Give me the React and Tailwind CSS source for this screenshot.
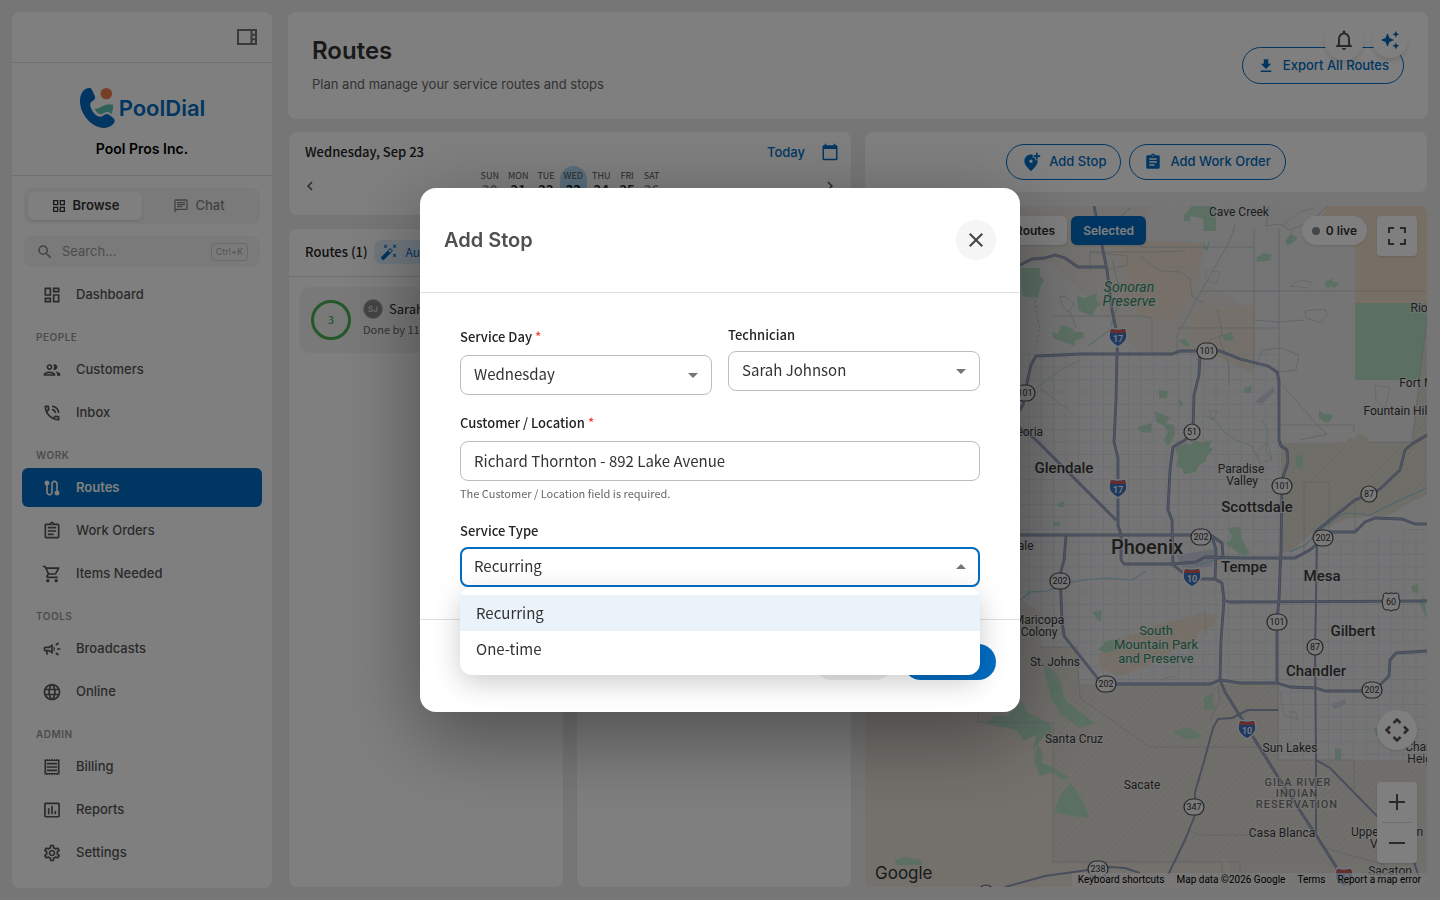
import { useState } from "react";
import {
  MdAddLocationAlt,
  MdArrowDropDown,
  MdArrowDropUp,
  MdAssignment,
  MdAutoAwesome,
  MdAutoFixHigh,
  MdCalendarToday,
  MdChevronLeft,
  MdChevronRight,
  MdClose,
  MdDownload,
  MdInsertChartOutlined,
  MdLanguage,
  MdOutlineAssignment,
  MdOutlineCampaign,
  MdOutlineChat,
  MdOutlineDashboard,
  MdOutlineGridView,
  MdOutlineNotifications,
  MdOutlinePhoneInTalk,
  MdOutlineReceipt,
  MdOutlineSettings,
  MdOutlineShoppingCart,
  MdOutlineViewSidebar,
  MdRoute,
  MdSearch,
} from "react-icons/md";

function GroupIcon({ size }) {
  return (
    <svg width={size} height={size} viewBox="0 0 24 24" fill="currentColor" aria-hidden="true">
      <path d="M9 13.750c-2.340 0-7 1.170-7 3.500V19h14v-1.750c0-2.330-4.660-3.500-7-3.500zM4.340 17c.840-.580 2.870-1.250 4.660-1.250s3.820.670 4.660 1.250H4.340zM9 12c1.930 0 3.500-1.570 3.500-3.500S10.930 5 9 5 5.500 6.570 5.500 8.500 7.070 12 9 12zm0-5c.830 0 1.500.670 1.500 1.500S9.830 10 9 10s-1.500-.670-1.500-1.500S8.170 7 9 7zm7.040 6.810c1.160.840 1.960 1.960 1.960 3.440V19h4v-1.750c0-2.020-3.500-3.170-5.960-3.440zM15 12c1.930 0 3.500-1.570 3.500-3.500S16.930 5 15 5c-.540 0-1.040.130-1.500.350.630.890 1 1.980 1 3.150s-.370 2.260-1 3.150c.460.220.960.350 1.500.350z" />
    </svg>
  );
}

const NAV = [
  { title: null, items: [["Dashboard", MdOutlineDashboard]] },
  {
    title: "PEOPLE",
    items: [
      ["Customers", GroupIcon],
      ["Inbox", MdOutlinePhoneInTalk],
    ],
  },
  {
    title: "WORK",
    items: [
      ["Routes", MdRoute],
      ["Work Orders", MdOutlineAssignment],
      ["Items Needed", MdOutlineShoppingCart],
    ],
  },
  {
    title: "TOOLS",
    items: [
      ["Broadcasts", MdOutlineCampaign],
      ["Online", MdLanguage],
    ],
  },
  {
    title: "ADMIN",
    items: [
      ["Billing", MdOutlineReceipt],
      ["Reports", MdInsertChartOutlined],
      ["Settings", MdOutlineSettings],
    ],
  },
];

const WEEK = [
  ["SUN", 20],
  ["MON", 21],
  ["TUE", 22],
  ["WED", 23],
  ["THU", 24],
  ["FRI", 25],
  ["SAT", 26],
];

function Logo() {
  return (
    <div className="flex items-center justify-center">
      <svg width="36" height="42" viewBox="0 0 36 42" aria-hidden="true">
        <path
          d="M7.500 1.600C10 .7 12 1 12.800 2.600L16 9.500C16.700 11.500 15 13 12.800 14.600 11 16 11 18 11.600 20 13.300 24.800 16.500 28.600 20.500 29.800 23.300 30.200 25 27.400 28 27 30 27 33 29.800 35 31.800 36.300 33.600 35.600 35.700 34 37.300 31.200 39.900 28 41 25 41 12.500 40.400 1 27.500 1 14 1 8 3.600 3.100 7.500 1.600z"
          fill="#006dc3"
        />
        <circle cx="27.300" cy="6.700" r="5.800" fill="#f07c4c" />
        <path
          d="M15.300 21.600C18.500 22.600 21.500 20 24 18.900 27 17.700 30.500 17.200 34 17.800 34.200 21.500 33.600 24.500 32.500 27.200 31 25.400 29.500 24.800 27.500 25 25.300 25.300 24 27.400 21.700 27.500 19.200 27.200 17 24.900 15.300 21.600z"
          fill="#5ec4b4"
        />
      </svg>
      <span className="ml-1 font-['Inter'] text-[22px] leading-8 font-semibold text-[#006dc3]">PoolDial</span>
    </div>
  );
}

function Sidebar() {
  const [query, setQuery] = useState("");

  return (
    <aside className="flex w-65 shrink-0 flex-col rounded-lg bg-white">
      <div className="flex h-[51px] items-center justify-end border-b border-[#e0e0e0] px-[13px]">
        <button aria-label="Toggle sidebar" className="text-[#757575]">
          <MdOutlineViewSidebar size={24} />
        </button>
      </div>

      <div className="border-b border-[#e0e0e0] pt-6 pb-3.5">
        <Logo />
        <p className="mt-2 text-center text-sm leading-6 font-semibold text-black">Pool Pros Inc.</p>
      </div>

      <div className="px-3 pt-3">
        <div className="flex rounded-lg bg-[#f5f5f5] p-1">
          <button className="flex h-7 flex-1 items-center justify-center gap-1.5 rounded-md bg-white text-[13px] font-semibold text-[#333] shadow-sm">
            <MdOutlineGridView size={16} /> Browse
          </button>
          <button className="flex h-7 flex-1 items-center justify-center gap-1.5 rounded-md text-[13px] font-medium text-[#858585]">
            <MdOutlineChat size={16} /> Chat
          </button>
        </div>
        <label className="mt-3 flex h-[31px] items-center rounded-lg bg-[#f5f5f5] px-3 text-[#858585]">
          <MdSearch size={18} />
          <input
            aria-label="Search"
            placeholder="Search..."
            value={query}
            onChange={(e) => setQuery(e.target.value)}
            className="ml-2 min-w-0 flex-1 bg-transparent text-[13px] outline-none placeholder:text-[#999]"
          />
          <kbd className="rounded border border-[#d5d5d5] px-1 font-['Inter'] text-[9px] leading-4 text-[#aaa]">
            Ctrl+K
          </kbd>
        </label>
      </div>

      <nav className="px-2.5 pt-2">
        {NAV.map((group) => (
          <div key={group.title || "main"}>
            {group.title && (
              <h2 className="h-9 px-3.5 pt-[15px] text-[10px] leading-4 font-semibold tracking-wider text-[#999]">
                {group.title}
              </h2>
            )}
            <ul className="space-y-1">
              {group.items.map(([label, Icon]) => (
                <li key={label}>
                  <a
                    href="#"
                    className={
                      label === "Routes"
                        ? "flex h-[39px] items-center gap-3.5 rounded-md bg-[#006dc3] px-5 text-[13px] font-semibold text-white"
                        : "flex h-[39px] items-center gap-3.5 rounded-md px-5 text-[13px] font-medium text-[#555]"
                    }
                  >
                    <Icon size={20} />
                    {label}
                  </a>
                </li>
              ))}
            </ul>
          </div>
        ))}
      </nav>
    </aside>
  );
}

function Header() {
  return (
    <header className="flex items-center justify-between rounded-lg bg-white p-6">
      <div>
        <h1 className="text-2xl leading-[30px] font-semibold text-[#333]">Routes</h1>
        <p className="mt-2 text-[13px] leading-[21px] text-[#666]">Plan and manage your service routes and stops</p>
      </div>
      <button className="flex h-[37px] items-center gap-2 rounded-full border border-[#006dc3] px-3.5 text-[13px] font-medium text-[#006dc3]">
        <MdDownload size={18} /> Export All Routes
      </button>
    </header>
  );
}

function WeekStrip() {
  return (
    <section className="h-[83px] overflow-hidden rounded-lg bg-white font-['Noto_Sans_CJK_JP',sans-serif]">
      <div className="flex items-center justify-between pt-2.5 pr-3 pl-4">
        <h2 className="text-[13px] leading-5 font-medium text-[#222]">Wednesday, Sep 23</h2>
        <div className="flex items-center gap-4">
          <button className="font-['Inter'] text-[13px] leading-5 font-medium text-[#006dc3]">Today</button>
          <button aria-label="Pick a date" className="text-[#006dc3]">
            <MdCalendarToday size={18} />
          </button>
        </div>
      </div>
      <div className="flex items-start justify-between px-3 pt-1">
        <button aria-label="Previous week" className="pt-[11px] text-[#555]">
          <MdChevronLeft size={18} />
        </button>
        <div className="flex gap-px">
          {WEEK.map(([day, date]) => (
            <button
              key={day}
              className={
                day === "WED"
                  ? "flex h-11 flex-col items-center rounded-full bg-[#b3dcf8] px-1 text-[#111]"
                  : day === "SUN" || day === "SAT"
                    ? "flex h-11 flex-col items-center rounded-full px-1 text-[#999]"
                    : "flex h-11 flex-col items-center rounded-full px-1 text-[#333]"
              }
            >
              <span className="pt-1 text-[9px] leading-3 text-[#555]">{day}</span>
              <span className="text-[13px] leading-4 font-bold">{date}</span>
            </button>
          ))}
        </div>
        <button aria-label="Next week" className="pt-[11px] text-[#555]">
          <MdChevronRight size={18} />
        </button>
      </div>
    </section>
  );
}

function RouteList() {
  return (
    <section className="min-w-0 flex-1 overflow-hidden rounded-lg bg-white font-['Noto_Sans_CJK_JP',sans-serif]">
      <div className="flex h-12 items-center gap-1.5 border-b border-[#ddd] pb-0.5 pl-4">
        <h2 className="text-[13px] font-medium whitespace-nowrap text-[#222]">Routes (1)</h2>
        <button className="flex h-6 items-center gap-2 rounded-lg bg-[#e0f0fc] px-1.5 text-xs whitespace-nowrap text-[#006dc3]">
          <MdAutoFixHigh size={18} /> Auto Assign
        </button>
      </div>
      <div className="p-2.5">
        <article className="flex h-[66px] items-center gap-3 rounded-xl bg-[#f2f2f2] px-3">
          <span className="flex size-10 shrink-0 items-center justify-center rounded-full border-3 border-[#4caf50] text-[10px] leading-4 font-medium text-[#4caf50]">
            3
          </span>
          <div className="min-w-0 pb-1">
            <div className="flex items-center gap-1.5">
              <span className="flex size-5 items-center justify-center rounded-full border border-[#bbb] bg-[#8a8a8a] font-['Inter'] text-[8px] font-semibold text-[#ddd]">
                SJ
              </span>
              <h3 className="text-[13px] leading-5 whitespace-nowrap text-[#222]">Sarah Johnson</h3>
            </div>
            <p className="mt-0.5 text-[11px] leading-4 whitespace-nowrap text-[#666]">Done by 11:30 AM</p>
          </div>
        </article>
      </div>
    </section>
  );
}

/* ---------- map ---------- */

const HIGHWAYS = [
  "M1094 206L1107 270 1112 310 1118 338 1117 354 1116 400 1114 442 1118 458 1118 525 1121 535 1121 560 1124 564 1172 564 1182 572 1192 578",
  "M1005 273L1020 265 1032 259 1045 258 1055 255 1065 258 1078 267 1106 267",
  "M1010 425L1023 405 1028 378 1031 365 1036 356 1060 355 1080 354 1172 354 1180 351 1220 351 1240 359 1268 366 1277 372 1279 381 1279 440 1281 446 1287 450 1288 462 1282 480 1281 550 1279 600 1277 620 1277 683",
  "M1200 355L1199 375 1194 395 1193 430 1185 440 1173 447 1170 470 1168 510 1172 520 1173 566",
  "M1010 535L1200 535 1212 536 1222 543 1223 556",
  "M1018 426L1036 440 1042 446 1116 520",
  "M1066 536L1064 560 1060 575 1062 620 1064 636 1099 680 1110 684 1210 684 1220 680 1240 683 1277 683 1290 687 1316 688 1325 691 1365 691 1380 685 1389 676 1390 660 1396 653 1427 651",
  "M1192 579L1215 579 1222 583 1224 600 1221 640 1220 680 1225 692 1250 732 1278 777 1316 835 1340 873 1350 887",
  "M1212 536L1216 550 1215 579M1172 564L1196 562 1205 557 1240 558 1295 558 1310 550 1323 539",
  "M1315 532L1355 500 1370 494 1380 489 1400 470 1405 450 1412 444 1427 435",
  "M1320 532L1355 532 1365 522 1375 518 1402 519 1415 524 1427 524",
  "M1222 600L1230 602 1427 601",
];

const SECONDARY = [
  "M1317 540L1316 600 1315 650 1316 760 1316 835M1316 760L1330 768 1378 817 1410 850 1420 880",
  "M1278 710L1248 710 1240 714 1232 718 1218 719 1213 728 1203 765 1195 792 1195 815 1185 840 1168 875",
  "M1005 887L1045 876 1088 870 1110 867 1125 868 1140 873",
];

const GREENS = [
  "M1020 268L1040 268 1040 276 1044 280 1040 288 1038 298 1022 296z",
  "M1077 296L1084 298 1097 293 1096 300 1101 304 1096 308 1092 316 1078 310z",
  "M1052 332L1058 334 1061 325 1072 328 1074 332 1083 332 1084 338 1076 340 1074 346 1064 342 1053 338z",
  "M1184 215L1192 206 1216 206 1216 231 1204 231 1203 218 1190 216 1190 221 1184 221z",
  "M1258 257L1263 253 1273 255 1265 261 1256 262z",
  "M1355 303L1427 303 1427 322 1420 380 1355 380z",
  "M1324 283L1332 278 1332 281 1339 283 1335 288 1330 286 1328 289z",
  "M1175 448L1186 443 1190 445 1196 440 1200 443 1212 440 1209 447 1213 449 1206 458 1206 461 1198 466 1196 472 1184 474 1182 468 1176 466 1178 458z",
  "M1155 411L1162 414 1171 418 1165 423 1174 425 1175 435 1168 446 1164 440 1168 432 1164 426 1156 422z",
  "M1159 390L1168 391 1167 398 1159 398z",
  "M1228 528L1240 527 1242 545 1236 541 1228 548 1232 536z",
  "M1319 410L1324 414 1333 414 1331 420 1326 423 1319 418z",
  "M1225 543L1240 537 1250 553 1243 556z",
  "M1043 665L1053 670 1061 683 1065 700 1080 712 1095 723 1080 728 1062 716 1052 700z",
  "M1022 700L1027 712 1050 724 1052 732 1044 736 1033 751 1036 735 1024 741 1016 730 985 724 994 716 1008 716z",
  "M1038 745L1043 753 1042 763 1050 766 1062 773 1069 777 1063 780 1055 774 1048 773 1040 776 1034 760z",
  "M1071 783L1079 794 1090 818 1072 816 1054 812 1060 796z",
  "M1098 650L1106 641 1120 638 1118 650 1105 653z",
  "M1173 733L1180 729 1190 728 1202 735 1196 739 1186 739z",
  "M1204 698L1214 693 1212 700 1216 709 1204 710z",
  "M1335 748L1341 749 1341 760 1335 759z",
  "M1203 241L1206 247 1210 240 1208 251 1203 249z",
  "M1285 242L1290 234 1298 237 1293 243 1288 245z",
  "M1255 258L1262 256 1273 259 1264 262zM1178 399L1183 403 1180 408z",
  "M1138 427L1152 423 1151 433 1140 432z",
  "M1057 504L1064 501 1064 507 1059 507zM1053 522L1060 522 1060 526 1053 526z",
  "M1178 340L1186 339 1190 345 1187 347zM1222 335L1232 332 1234 340 1224 341z",
  "M1296 456L1303 455 1303 469 1296 468zM1374 728L1388 724 1389 735 1384 730 1376 736z",
  "M1093 612L1102 610 1101 622 1096 618zM1244 388L1252 386 1251 393 1245 393z",
  "M895 860L905 857 922 860 922 865 896 865z",
  "M1424 594L1427 620 1420 604zM1411 586L1418 584 1418 594 1413 592z",
];

// [text, x, y, size, weight]
const CITIES = [
  ["Cave Creek", 1239, 216, 12, 400],
  ["Glendale", 1064, 473, 15, 500],
  ["Scottsdale", 1257, 512, 15, 500],
  ["Paradise", 1241, 473, 12, 400],
  ["Valley", 1242, 485, 12, 400],
  ["Phoenix", 1147, 554, 20, 500],
  ["Tempe", 1244, 572, 15, 500],
  ["Mesa", 1322, 581, 15, 500],
  ["Gilbert", 1353, 636, 15, 500],
  ["Chandler", 1316, 676, 15, 500],
  ["Maricopa", 1039, 624, 12, 400],
  ["Colony", 1039, 636, 12, 400],
  ["St. Johns", 1055, 666, 12, 400],
  ["Santa Cruz", 1074, 743, 12, 400],
  ["Sacate", 1142, 789, 12, 400],
  ["Sun Lakes", 1290, 752, 12, 400],
  ["Casa Blanca", 1282, 837, 12, 400],
  ["Peoria", 1026, 436, 12, 400],
  ["Avondale", 1009, 550, 12, 400],
  ["Sacaton", 1390, 875, 12, 400],
  ["Upper Santan", 1387, 836, 12, 400],
  ["Village", 1388, 848, 12, 400],
  ["Chandler", 1429, 751, 12, 400],
  ["Heights", 1428, 763, 12, 400],
  ["Rio Verde", 1436, 312, 12, 400],
  ["Fort McDowell", 1438, 387, 12, 400],
  ["Fountain Hills", 1400, 415, 12, 400],
];

// [number, x, y]
const ROUTE_BADGES = [
  [101, 1207, 351],
  [101, 1282, 486],
  [101, 1277, 622],
  [101, 1025, 393],
  [51, 1192, 432],
  [202, 1201, 537],
  [202, 1323, 538],
  [202, 1060, 581],
  [202, 1106, 684],
  [202, 1372, 690],
  [87, 1369, 494],
  [87, 1315, 647],
  [347, 1194, 807],
  [238, 1098, 869],
  [84, 986, 893],
];

const SHIELDS = [
  [17, 1118, 337],
  [17, 1118, 488],
  [10, 1192, 577],
  [10, 1247, 729],
  [10, 1344, 877],
];

function MapCanvas() {
  return (
    <svg
      className="absolute inset-0 size-full font-['Roboto']"
      viewBox="865 206 562 681"
      preserveAspectRatio="xMidYMid slice"
      role="img"
      aria-label="Map of Phoenix"
    >
      <defs>
        <pattern id="blocks" width="12.500" height="12.500" patternUnits="userSpaceOnUse" x="3" y="4">
          <path d="M0 .5H12.500M.5 0V12.500" stroke="#d6dae4" strokeWidth=".8" fill="none" />
        </pattern>
        <pattern id="hatch" width="7" height="7" patternUnits="userSpaceOnUse">
          <path d="M0 7L7 0" stroke="#d3cfc5" strokeWidth=".6" />
        </pattern>
      </defs>

      <rect x="865" y="206" width="562" height="681" fill="#ebebed" />

      {/* desert and parks */}
      <path d="M1020 206L1150 206 1140 240 1203 243 1200 280 1254 310 1254 368 1215 352 1140 355 1090 300 1050 262 1020 260z" fill="#e9e5de" />
      <path d="M1115 252L1140 241 1203 243 1200 262 1192 291 1177 318 1150 320 1118 300 1128 275z" fill="#efe0d0" />
      <path d="M1195 311L1254 305 1254 375 1228 362 1190 340z" fill="#ebe0d5" />
      <path d="M1328 206L1427 206 1427 303 1355 303 1355 230 1320 222z" fill="#efdfca" />
      <path d="M865 600L1020 600 1040 612 1040 647 1078 647 1078 684 1278 684 1278 760 1427 760 1427 887 865 887z" fill="#e2dfd6" />
      <path d="M865 712L978 712 978 722 1053 723 1053 862 1230 862 1230 887 865 887z" fill="#e9e3da" />
      <path d="M1281 443L1346 442 1348 438 1355 438 1359 433 1367 437 1368 442 1412 442 1427 318 1427 495 1410 503 1390 515 1345 519 1310 535 1290 552 1281 553z" fill="#dfdcd2" />

      {/* city blocks */}
      <path d="M1020 350L1277 350 1282 445 1281 550 1427 526 1427 760 1278 760 1278 684 1078 684 1078 648 1040 648 1040 600 1020 600z" fill="url(#blocks)" />
      <path d="M1140 206L1279 206 1279 350 1140 350z" fill="url(#blocks)" opacity=".3" />
      <path d="M1098 655L1110 642 1140 632 1160 624 1180 620 1200 613 1218 616 1214 626 1200 632 1195 642 1170 652 1150 665 1120 676 1100 668z" fill="#ecdecf" />
      <path d="M1053 723L1053 600 1078 684 1278 684 1278 760 1427 760 1427 862 1053 862z" fill="url(#hatch)" />
      <path d="M1281 443L1412 442 1427 318 1427 495 1345 519 1281 553z" fill="url(#hatch)" />

      {GREENS.map((d) => (
        <path key={d} d={d} fill="#b6dfc6" />
      ))}
      <path d="M1255 402L1273 387 1275 391 1262 404zM1176 555L1216 549 1212 566 1184 570zM1332 704L1346 699 1345 705 1334 709z" fill="#cdd2e0" />

      {/* rivers and canals */}
      <g fill="none" stroke="#9ad0dd" strokeWidth="1.200">
        <path d="M1018 602L1030 592 1047 591 1068 583 1085 580 1105 578 1132 580 1146 571" />
        <path d="M1196 566L1215 560 1240 556M1290 552L1305 545 1330 522 1345 513 1370 515 1400 500 1427 488" />
        <path d="M1117 306L1110 330 1088 346M1118 228L1122 215 1130 208" strokeWidth="1" />
        <path d="M1035 300L1040 330 1036 345" strokeWidth="1" strokeDasharray="3 2" />
      </g>
      <path
        d="M1206 416L1215 420 1225 433 1236 440 1252 446 1258 460M1040 388L1055 400 1066 408 1073 415M1036 388L1060 370 1080 360M1262 420L1268 430 1266 452 1272 460"
        fill="none"
        stroke="#bcdcc9"
        strokeWidth="1"
      />

      {/* streets and boundaries */}
      <g fill="none" stroke="#bdc1ca" strokeWidth=".8">
        <path d="M1235 225L1230 240 1206 283 1177 335 1177 355" />
        <path d="M1053 316L1140 316 1152 318 1152 354M1177 328L1279 328M1140 247L1254 247M1254 230L1254 368" />
        <path d="M1140 256L1160 271 1180 272 1190 279 1192 296 1204 303M1200 291L1427 291M1279 228L1279 380" />
        <path d="M1089 252L1152 252 1185 251M1090 271L1090 252 1127 256 1127 265 1105 270M1112 260L1120 290" />
        <path d="M1269 206L1266 226 1280 224 1290 230 1310 222 1328 206M1254 320L1279 322 1304 320" />
        <path d="M1305 311L1325 309 1327 315 1320 323 1306 318zM1256 366L1262 350 1280 348 1299 355 1296 370 1278 372" />
        <path d="M1282 385L1300 405 1320 428 1327 434 1300 440M1279 425L1354 425 1354 432" />
        <path d="M1304 482L1329 482 1329 531M1304 482L1304 553M1355 498L1355 532" />
        <path d="M1040 647L1078 647M1078 665L1080 698 1150 747 1262 747M1218 684L1220 700 1210 720" />
        <path d="M978 712L978 722 1053 723 1053 862 1222 862 1222 887M1278 684L1278 760 1354 760 1354 790M1188 830L1200 835 1250 835" />
        <path d="M1325 848L1385 865M1228 862L1240 862 1240 887M1427 318L1412 442 1368 442" />
        <path d="M1196 360L1210 340 1223 335M1217 310L1222 330 1220 340 1229 366 1229 385M1060 296L1066 297 1074 304 1068 312 1062 306zM1070 312L1076 328" />
      </g>
      <g fill="none" stroke="#b9c6c0" strokeWidth=".7" opacity=".8">
        <path d="M1283 225L1300 212 1314 208M1287 245L1293 230M1206 270L1220 272 1216 284 1206 280zM1290 286L1300 280 1312 282 1308 288zM1375 385L1390 388 1385 408 1376 400zM1209 410L1218 412 1212 420z" />
        <path d="M1160 680L1175 676M1280 692L1284 715 1298 720 1296 712 1288 712M1205 610L1206 636M1257 452L1268 442 1272 460 1260 463z" />
      </g>

      <g fill="none" strokeLinejoin="round">
        {HIGHWAYS.map((d) => (
          <path key={d} d={d} stroke="#8590ae" strokeWidth="2.800" />
        ))}
        {HIGHWAYS.map((d) => (
          <path key={d} d={d} stroke="#a2adc9" strokeWidth="1.300" />
        ))}
        {SECONDARY.map((d) => (
          <path key={d} d={d} stroke="#929cb8" strokeWidth="2" />
        ))}
      </g>

      {ROUTE_BADGES.map(([num, x, y]) => (
        <g key={`${num}-${x}`}>
          <rect
            x={num > 99 ? x - 10 : x - 8}
            y={y - 8}
            width={num > 99 ? 20 : 16}
            height="16"
            rx="8"
            fill="#f2f2f2"
            stroke="#4a4a4a"
            strokeWidth="1.200"
          />
          <text x={x} y={y + 3} fontSize="9" textAnchor="middle" fill="#333">
            {num}
          </text>
        </g>
      ))}
      <g>
        <path
          d="M1383 595q1-2 3-2 2 1 5 0 3 1 5 0 2 0 3 2-1 3 1 6-1 4-1 6-1 3-3 3-2-1-5 1-3-2-5-1-2 0-3-3 0-2-1-6 2-3 1-6z"
          fill="#f2f2f2"
          stroke="#444"
        />
        <text x="1391" y="605" fontSize="9" textAnchor="middle" fill="#333">60</text>
      </g>
      {SHIELDS.map(([num, x, y]) => (
        <g key={`${num}-${y}`}>
          <path
            d={`M${x - 7} ${y - 9}q7 2 14 0q2 4 2 8q0 6-9 11q-9-5-9-11q0-4 2-8z`}
            fill="#3d74c4"
            stroke="#eee"
            strokeWidth="1.500"
          />
          <path d={`M${x - 7} ${y - 8}q7 2 14 0l1 4h-16z`} fill="#cf5a57" />
          <text x={x} y={y + 5} fontSize="9" fontWeight="500" textAnchor="middle" fill="#fff">
            {num}
          </text>
        </g>
      ))}

      <g textAnchor="middle" stroke="#efefef" strokeWidth="2" strokeOpacity=".7" paintOrder="stroke">
        {CITIES.map(([name, x, y, size, weight]) => (
          <text key={`${name}-${y}`} x={x} y={y} fontSize={size} fontWeight={weight} fill="#3a3a3a">
            {name}
          </text>
        ))}
        <g fill="#2c8a63" fontSize="13">
          <text x="1129" y="292" fontSize="14" fontStyle="italic">Sonoran</text>
          <text x="1129" y="306" fontSize="14" fontStyle="italic">Preserve</text>
          <text x="1156" y="635">South</text>
          <text x="1156" y="649">Mountain Park</text>
          <text x="1156" y="663">and Preserve</text>
        </g>
        <g fill="#777" fontSize="11" fontWeight="500" letterSpacing="1">
          <text x="1298" y="786">GILA RIVER</text>
          <text x="1297" y="797">INDIAN</text>
          <text x="1297" y="808">RESERVATION</text>
        </g>
      </g>
    </svg>
  );
}

function MapPanel() {
  return (
    <section className="relative min-h-0 flex-1 overflow-hidden rounded-lg">
      <MapCanvas />

      <div className="absolute top-2.5 left-30 flex gap-1 font-['Inter'] text-xs font-semibold">
        <button className="h-[29px] rounded-md bg-white px-3 text-[#333] shadow">All Routes</button>
        <button className="h-[29px] rounded-md bg-[#006dc3] px-3 text-white shadow">Selected</button>
      </div>

      <div className="absolute top-2.5 right-2.5 flex items-start gap-2.5">
        <div className="flex h-[29px] items-center gap-1.5 rounded-full bg-white px-2.5 text-xs font-semibold text-[#333] shadow">
          <span className="size-2 rounded-full bg-[#8a8a8a]" /> 0 live
        </div>
        <button aria-label="Toggle fullscreen" className="flex size-10 items-center justify-center rounded-sm bg-white shadow">
          <svg width="18" height="18" viewBox="0 0 18 18" fill="none" stroke="#555" strokeWidth="2">
            <path d="M6 1H1V6M12 1H17V6M6 17H1V12M12 17H17V12" />
          </svg>
        </button>
      </div>

      <div className="absolute right-2.5 bottom-6 flex flex-col gap-8">
        <button aria-label="Map camera controls" className="flex size-10 items-center justify-center rounded-full bg-white shadow">
          <svg width="24" height="24" viewBox="0 0 24 24" fill="none" stroke="#555" strokeWidth="2.500">
            <path d="M8.500 5L12 1.500 15.500 5M8.500 19L12 22.500 15.500 19M5 8.500L1.500 12 5 15.500M19 8.500L22.500 12 19 15.500" />
          </svg>
        </button>
        <div className="flex flex-col items-center rounded-sm bg-white shadow">
          <button aria-label="Zoom in" className="flex size-10 items-center justify-center">
            <svg width="16" height="16" stroke="#555" strokeWidth="2">
              <path d="M8 0V16M0 8H16" />
            </svg>
          </button>
          <span className="h-px w-7.5 bg-[#ddd]" />
          <button aria-label="Zoom out" className="flex size-10 items-center justify-center">
            <svg width="16" height="16" stroke="#555" strokeWidth="2">
              <path d="M0 8H16" />
            </svg>
          </button>
        </div>
      </div>

      <span className="absolute bottom-0.5 left-2.5 font-['Inter'] text-[17px] leading-6 text-[#333]">Google</span>
      <div className="absolute right-0 bottom-0 flex gap-3 bg-[#f5f5f5]/70 px-1.5 font-['Roboto'] text-[10px] leading-[14px] text-black">
        <button>Keyboard shortcuts</button>
        <span>Map data ©2026 Google</span>
        <a href="#">Terms</a>
        <a href="#">Report a map error</a>
      </div>
    </section>
  );
}

/* ---------- dialog ---------- */

const FIELD =
  "h-10 w-full appearance-none rounded-lg border border-[#bdbdbd] bg-white px-[13px] pb-0.5 text-[15px] text-[#333] outline-none";

function AddStopDialog() {
  const [day, setDay] = useState("Wednesday");
  const [tech, setTech] = useState("Sarah Johnson");
  const [customer, setCustomer] = useState("Richard Thornton - 892 Lake Avenue");
  const [type, setType] = useState("Recurring");

  return (
    <div className="fixed inset-0 z-20 flex items-center justify-center bg-black/50">
      <div
        role="dialog"
        aria-labelledby="dialog-title"
        className="w-150 max-w-full rounded-2xl bg-white font-['Noto_Sans_CJK_JP',sans-serif] shadow-[0_24px_80px_rgba(0,0,0,0.4)]"
      >
        <div className="flex items-center justify-between border-b border-[#ddd] px-6 py-8">
          <h2 id="dialog-title" className="font-['Inter'] text-xl font-semibold text-[#505050]">
            Add Stop
          </h2>
          <button aria-label="Close" className="flex size-10 items-center justify-center rounded-full bg-[#f5f5f5] text-[#444]">
            <MdClose size={24} />
          </button>
        </div>

        <form className="space-y-4 px-10 py-8">
          <div className="grid grid-cols-2 items-start gap-4">
            <div>
              <label htmlFor="day" className="block text-[13px] leading-6 font-medium text-[#222]">
                Service Day <span className="align-top text-[#f44336]">*</span>
              </label>
              <div className="relative mt-1.5">
                <select id="day" value={day} onChange={(e) => setDay(e.target.value)} className={FIELD}>
                  <option>Wednesday</option>
                  <option>Thursday</option>
                </select>
                <MdArrowDropDown size={24} className="pointer-events-none absolute top-2 right-[7px] text-[#757575]" />
              </div>
            </div>
            <div>
              <label htmlFor="tech" className="block text-[13px] leading-5 font-medium text-[#222]">
                Technician
              </label>
              <div className="relative mt-1.5">
                <select id="tech" value={tech} onChange={(e) => setTech(e.target.value)} className={FIELD}>
                  <option>Sarah Johnson</option>
                </select>
                <MdArrowDropDown size={24} className="pointer-events-none absolute top-2 right-[7px] text-[#757575]" />
              </div>
            </div>
          </div>

          <div>
            <label htmlFor="customer" className="block text-[13px] leading-6 font-medium text-[#222]">
              Customer / Location <span className="align-top text-[#f44336]">*</span>
            </label>
            <input
              id="customer"
              value={customer}
              onChange={(e) => setCustomer(e.target.value)}
              className={`${FIELD} mt-1.5`}
            />
            <p className="mt-0.5 pb-0.5 text-[11px] leading-5 text-[#666]">The Customer / Location field is required.</p>
          </div>

          <div>
            <label htmlFor="type" className="block text-[13px] leading-5 font-medium text-[#222]">
              Service Type
            </label>
            <div className="relative mt-1.5">
              <select
                id="type"
                value={type}
                onChange={(e) => setType(e.target.value)}
                className="h-10 w-full appearance-none rounded-lg border-2 border-[#006dc3] bg-white px-3 pb-0.5 text-[15px] text-[#333] outline-none"
              >
                <option>Recurring</option>
                <option>One-time</option>
              </select>
              <MdArrowDropUp size={24} className="pointer-events-none absolute top-2 right-[7px] text-[#757575]" />
              <ul
                role="listbox"
                aria-label="Service Type"
                className="absolute inset-x-0 top-full z-10 rounded-xl bg-white py-2 text-[15px] text-[#333] shadow-[0_8px_28px_rgba(0,0,0,0.2)]"
              >
                {["Recurring", "One-time"].map((option) => (
                  <li
                    key={option}
                    role="option"
                    aria-selected={option === type}
                    onClick={() => setType(option)}
                    className={option === type ? "bg-[#eaf2fa] px-4 leading-9" : "px-4 leading-9"}
                  >
                    {option}
                  </li>
                ))}
              </ul>
            </div>
          </div>
        </form>

        <div className="flex justify-end gap-2.5 border-t border-[#ddd] px-6 pt-6 pb-8 font-['Inter'] text-[13px] font-medium">
          <button className="h-9 rounded-full bg-[#eee] px-[18px] text-[#444]">Cancel</button>
          <button className="h-9 rounded-full bg-[#006dc3] px-[18px] text-white">Add Stop</button>
        </div>
      </div>
    </div>
  );
}

export default function App() {
  return (
    <div className="relative flex h-screen gap-4 bg-[#ededed] p-3 font-['Inter',sans-serif]">
      <Sidebar />

      <main className="flex min-w-0 flex-1 flex-col">
        <Header />
        <div className="mt-3 grid min-h-0 flex-1 grid-cols-2 gap-3.5 p-px">
          <div className="flex min-h-0 min-w-0 flex-col gap-3.5">
            <WeekStrip />
            <div className="flex min-h-0 flex-1 gap-3.5">
              <RouteList />
              <section className="flex-1 rounded-lg bg-white" />
            </div>
          </div>
          <div className="flex min-h-0 min-w-0 flex-col gap-3.5">
            <div className="flex justify-center gap-2 rounded-lg bg-white p-3 text-[13px] font-medium text-[#006dc3]">
              <button className="flex h-9 items-center gap-2 rounded-full border border-[#006dc3] px-3.5">
                <MdAddLocationAlt size={20} /> Add Stop
              </button>
              <button className="flex h-9 items-center gap-2 rounded-full border border-[#006dc3] px-3.5">
                <MdAssignment size={18} /> Add Work Order
              </button>
            </div>
            <MapPanel />
          </div>
        </div>
      </main>

      <div className="absolute top-5 right-8 flex items-center gap-2">
        <button aria-label="Notifications" className="flex size-10 items-center justify-center rounded-full bg-white text-[#555] shadow-md">
          <MdOutlineNotifications size={24} />
        </button>
        <button aria-label="Assistant" className="flex size-9 items-center justify-center rounded-full bg-white text-[#006dc3] shadow-md">
          <MdAutoAwesome size={20} />
        </button>
      </div>

      <AddStopDialog />
    </div>
  );
}
